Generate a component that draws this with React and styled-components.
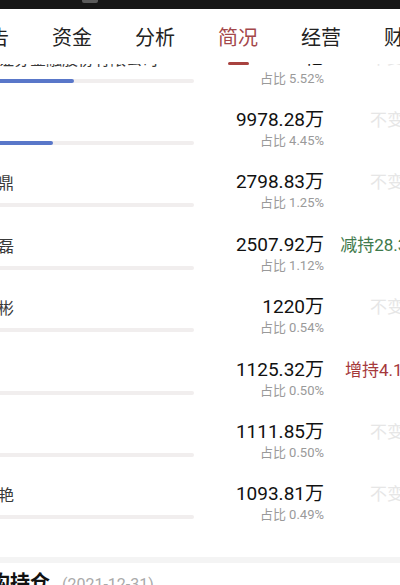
import styled, { createGlobalStyle } from "styled-components";

const GlobalStyle = createGlobalStyle`
  html, body {
    margin: 0;
    padding: 0;
    background: #fff;
  }
  body {
    font-family: Roboto, "Noto Sans CJK SC", sans-serif;
    overflow: hidden;
  }
`;

const TABS = ["公告", "资金", "分析", "简况", "经营", "财务"];
const ACTIVE = "简况";

const HOLDERS = [
  { name: "中国证券金融股份有限公司", amount: "1.24亿", ratio: 5.52, change: "不变", kind: "same" },
  { name: "刘芳", amount: "9978.28万", ratio: 4.45, change: "不变", kind: "same" },
  { name: "陈立鼎", amount: "2798.83万", ratio: 1.25, change: "不变", kind: "same" },
  { name: "张晓磊", amount: "2507.92万", ratio: 1.12, change: "减持28.36万", kind: "down" },
  { name: "李文彬", amount: "1220万", ratio: 0.54, change: "不变", kind: "same" },
  { name: "周强", amount: "1125.32万", ratio: 0.5, change: "增持4.15万", kind: "up" },
  { name: "赵敏", amount: "1111.85万", ratio: 0.5, change: "不变", kind: "same" },
  { name: "孙丽艳", amount: "1093.81万", ratio: 0.49, change: "不变", kind: "same" },
];

const changeColor = {
  up: "#a5393b",
  down: "#3f7a4c",
  same: "#e6e6e6",
};

const App = () => {
  return (
    <Screen>
      <GlobalStyle />
      <StatusBar>
        <Notch />
      </StatusBar>
      <TabBar>
        {TABS.map((t) => (
          <Tab key={t} $active={t === ACTIVE}>
            {t}
          </Tab>
        ))}
      </TabBar>
      <Scroller>
        <Content>
          <HolderList>
            {HOLDERS.map((h) => (
              <Row key={h.name}>
                <Left>
                  <Name>{h.name}</Name>
                  <Track>
                    <Fill style={{ width: `${h.ratio * 8.6}%` }} />
                  </Track>
                </Left>
                <Figures>
                  <Amount>{h.amount}</Amount>
                  <Share>占比 {h.ratio.toFixed(2)}%</Share>
                </Figures>
                <Change $kind={h.kind}>{h.change}</Change>
              </Row>
            ))}
          </HolderList>
          <Divider />
          <SectionHead>
            <SectionTitle>机构持仓</SectionTitle>
            <SectionDate>(2021-12-31)</SectionDate>
          </SectionHead>
        </Content>
      </Scroller>
    </Screen>
  );
};

export default App;

const Screen = styled.div`
  width: 400px;
  height: 585px;
  display: flex;
  flex-direction: column;
  overflow: hidden;
  background: #fff;
`;
const StatusBar = styled.div`
  height: 9px;
  flex: none;
  background: #161616;
  display: flex;
  padding-left: 82px;
`;
const Notch = styled.div`
  width: 16px;
  height: 3px;
  background: #5a5a5a;
  border-radius: 0 0 2px 2px;
`;
const TabBar = styled.div`
  height: 55px;
  flex: none;
  display: flex;
  margin-left: -52.5px;
  background: #fff;
`;
const Tab = styled.div`
  width: 83px;
  flex: none;
  display: flex;
  align-items: center;
  justify-content: center;
  padding-bottom: 1px;
  box-sizing: border-box;
  font-family: "Noto Sans CJK SC", sans-serif;
  font-size: 20px;
  color: ${(p) => (p.$active ? "#a4474a" : "#222")};
  position: relative;
  white-space: nowrap;

  &::after {
    content: "";
    display: ${(p) => (p.$active ? "block" : "none")};
    position: absolute;
    bottom: -1px;
    left: 50%;
    width: 21px;
    height: 3px;
    margin-left: -10.5px;
    border-radius: 1.5px;
    background: #a8423f;
  }
`;
const Scroller = styled.div`
  flex: 1;
  overflow: hidden;
`;
const Content = styled.div`
  margin-top: -37.4px;
`;
const HolderList = styled.div`
  margin-left: -34px;
  padding-bottom: 31px;
`;
const Row = styled.div`
  display: flex;
  align-items: flex-start;
  height: 62.4px;
  padding-top: 19px;
  box-sizing: border-box;
`;
const Left = styled.div`
  width: 228px;
  flex: none;
  display: flex;
  flex-direction: column;
`;
const Name = styled.div`
  font-family: "Noto Sans CJK SC", sans-serif;
  font-size: 16px;
  line-height: 24px;
  color: #3a3a3a;
  white-space: nowrap;
  overflow: hidden;
`;
const Track = styled.div`
  margin-top: 9px;
  height: 4px;
  border-radius: 2px;
  background: #f1eeee;
  overflow: hidden;
`;
const Fill = styled.div`
  height: 100%;
  background: #5977c9;
  border-radius: 2px;
`;
const Figures = styled.div`
  width: 130px;
  flex: none;
  display: flex;
  flex-direction: column;
  align-items: flex-end;
`;
const Amount = styled.div`
  font-size: 19px;
  line-height: 24px;
  color: #111;
  white-space: nowrap;
`;
const Share = styled.div`
  font-size: 13px;
  line-height: 17px;
  color: #9a9a9a;
  white-space: nowrap;
`;
const Change = styled.div`
  width: 126px;
  flex: none;
  text-align: center;
  font-size: 17px;
  line-height: 24px;
  color: ${(p) => changeColor[p.$kind]};
  white-space: nowrap;
`;
const Divider = styled.div`
  height: 6px;
  background: #f4f4f4;
`;
const SectionHead = styled.div`
  display: flex;
  align-items: baseline;
  padding-top: 5px;
  margin-left: -30px;
`;
const SectionTitle = styled.div`
  font-family: "Noto Sans CJK SC", sans-serif;
  font-size: 20px;
  line-height: 28px;
  font-weight: bold;
  color: #111;
  white-space: nowrap;
`;
const SectionDate = styled.div`
  margin-left: 12px;
  font-size: 16px;
  color: #aaa;
  white-space: nowrap;
`;
